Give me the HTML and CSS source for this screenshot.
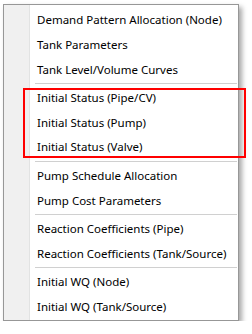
FILE: index.html
```html
<!DOCTYPE html>
<html lang="en">
<head>
    <meta charset="UTF-8">
    <title>Context Menu</title>
    <link rel="stylesheet" href="styles.css">
</head>
<body>

<div class="menu">
    <div class="item">Demand Pattern Allocation (Node)</div>
    <div class="item">Tank Parameters</div>
    <div class="item">Tank Level/Volume Curves</div>
    <div class="sep"></div>
    <div class="item">Initial Status (Pipe/CV)</div>
    <div class="item">Initial Status (Pump)</div>
    <div class="item">Initial Status (Valve)</div>
    <div class="sep"></div>
    <div class="item">Pump Schedule Allocation</div>
    <div class="item">Pump Cost Parameters</div>
    <div class="sep"></div>
    <div class="item">Reaction Coefficients (Pipe)</div>
    <div class="item">Reaction Coefficients (Tank/Source)</div>
    <div class="sep"></div>
    <div class="item">Initial WQ (Node)</div>
    <div class="item">Initial WQ (Tank/Source)</div>
</div>

<div class="highlight"></div>

</body>
</html>
```

FILE: styles.css
```css
body {
    margin: 0;
    padding: 0;
    background-color: #fff;
    font-family: "Noto Sans", sans-serif;
}
.menu {
    width: 234px;
    margin: 4px 0 0 3px;
    padding: 3.2px 0 0.1px 0;
    border: 1px solid #979797;
    background: linear-gradient(to right, #f0f0f0 0, #f0f0f0 25px, #e2e3e3 25px, #e2e3e3 26px, #fff 26px);
    box-shadow: 3px 3px 5px rgba(0,0,0,0.35);
}
.item {
    height: 24.7px;
    line-height: 24.7px;
    padding-left: 33px;
    font-size: 11.5px;
    color: #000;
    white-space: nowrap;
}
.sep {
    height: 3.8px;
    margin: 0 1px 0 31px;
    background: linear-gradient(#fff 0, #fff 1.4px, #d0d0d0 1.4px, #d0d0d0 2.4px, #fff 2.4px);
}
.highlight {
    position: absolute;
    left: 23px;
    top: 88px;
    width: 219px;
    height: 66px;
    border: 2px solid #ff0000;
}
```
